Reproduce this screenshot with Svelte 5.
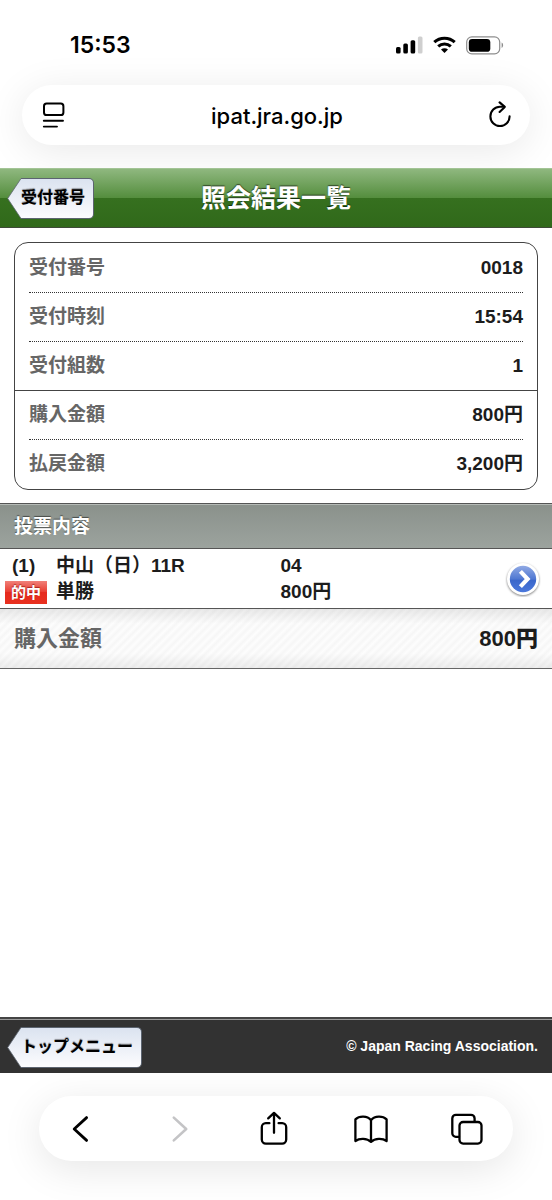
<script>
    let receipt = [
        { label: '受付番号', value: '0018' },
        { label: '受付時刻', value: '15:54' },
        { label: '受付組数', value: '1', last: true },
        { label: '購入金額', value: '800円' },
        { label: '払戻金額', value: '3,200円' }
    ];

    let bets = [
        { no: '(1)', hit: true, race: '中山（日）11R', type: '単勝', horse: '04', amount: '800円' }
    ];
</script>

{#snippet back(text)}
    <a class="back" href="#back">
        <svg width="14" height="41" viewBox="0 0 14 41" aria-hidden="true">
            <defs>
                <linearGradient id="tip" x1="0" y1="0" x2="0" y2="1">
                    <stop offset="0" stop-color="#dbe3f0" />
                    <stop offset="1" stop-color="#fcfcfe" />
                </linearGradient>
            </defs>
            <path d="M14 0.5 L0.7 20.5 L14 40.5 Z" fill="url(#tip)" />
            <path d="M14 0.5 L0.7 20.5 L14 40.5" fill="none" stroke="#5c6470" stroke-width="0.8" />
        </svg>
        <span>{text}</span>
    </a>
{/snippet}

<div class="screen">
    <div class="top">
        <div class="status">
            <span class="time">15:53</span>
            <div class="signals">
                <svg width="27" height="18" viewBox="0 0 27 18" aria-hidden="true">
                    <rect x="0" y="11" width="4.6" height="6.5" rx="1.5" />
                    <rect x="7.3" y="7.6" width="4.6" height="9.9" rx="1.5" />
                    <rect x="14.6" y="4.3" width="4.6" height="13.2" rx="1.5" />
                    <rect x="21.9" y="0.6" width="4.6" height="16.9" rx="1.5" fill="#cfcfcf" />
                </svg>
                <svg width="23" height="18" viewBox="0 0 23 18" fill="none" stroke="#000" stroke-width="3.1" aria-hidden="true">
                    <path d="M1.3 6.2 C7 0.9 16 0.9 21.7 6.2" />
                    <path d="M5.2 10.4 C8.8 7.2 14.2 7.2 17.8 10.4" />
                    <path d="M8 13.4 C10 11.7 13 11.7 15 13.4 L11.5 17.1 Z" fill="#000" stroke="none" />
                </svg>
                <svg width="38" height="19" viewBox="0 0 38 19" aria-hidden="true">
                    <rect x="0.7" y="0.9" width="33" height="17" rx="5.2" fill="#fff" stroke="#8d8d8d" stroke-width="1.2" />
                    <rect x="2.8" y="3" width="21.5" height="12.8" rx="3.4" />
                    <path d="M35.6 6.5 C37.6 7.3 37.6 11.1 35.6 12 Z" fill="#8d8d8d" />
                </svg>
            </div>
        </div>
        <div class="address">
            <button aria-label="ページメニュー">
                <svg width="24" height="28" viewBox="0 0 24 28" fill="none" stroke="#000" stroke-width="2" stroke-linecap="round" aria-hidden="true">
                    <rect x="2" y="2.6" width="19.4" height="11.4" rx="2.6" />
                    <path d="M1.8 19.8 H21 M1.8 25.6 H15" stroke-width="1.9" />
                </svg>
            </button>
            <span class="url">ipat.jra.go.jp</span>
            <button aria-label="再読み込み">
                <svg width="24" height="28" viewBox="0 0 24 28" fill="none" stroke="#000" stroke-width="2.1" stroke-linecap="round" stroke-linejoin="round" aria-hidden="true">
                    <path d="M21.6 15.4 A9.6 9.6 0 1 1 12 5.8 H16" />
                    <path d="M11.6 1.4 L16.8 5.9 L11.6 11" />
                </svg>
            </button>
        </div>
    </div>

    <header>
        {@render back('受付番号')}
        <h1>照会結果一覧</h1>
    </header>

    <main>
        <dl class="receipt">
            {#each receipt as row}
                <div class:last={row.last}>
                    <dt>{row.label}</dt>
                    <dd>{row.value}</dd>
                </div>
            {/each}
        </dl>

        <h2>投票内容</h2>
        {#each bets as bet}
            <a class="bet" href="#bet">
                <span class="no">
                    <span class="index">{bet.no}</span>
                    {#if bet.hit}<span class="hit">的中</span>{/if}
                </span>
                <span>{bet.race}<br />{bet.type}</span>
                <span>{bet.horse}<br />{bet.amount}</span>
                <svg width="36" height="36" viewBox="0 0 36 36" aria-hidden="true">
                    <defs>
                        <linearGradient id="ball" x1="0" y1="0" x2="0" y2="1">
                            <stop offset="0" stop-color="#90a9e4" />
                            <stop offset="0.5" stop-color="#5078d2" />
                            <stop offset="0.55" stop-color="#3a66ca" />
                            <stop offset="1" stop-color="#4b78dc" />
                        </linearGradient>
                    </defs>
                    <circle class="ring" cx="18" cy="18" r="16" fill="#fff" />
                    <circle cx="18" cy="18" r="13.2" fill="url(#ball)" />
                    <path d="M15.4 10.4 L22.6 18 L15.4 25.6" fill="none" stroke="#fff" stroke-width="4.2" />
                </svg>
            </a>
        {/each}

        <div class="total">
            <span>購入金額</span>
            <strong>800円</strong>
        </div>
    </main>

    <footer>
        {@render back('トップメニュー')}
        <small>© Japan Racing Association.</small>
    </footer>

    <div class="bottom">
        <nav>
            <button aria-label="戻る">
                <svg width="36" height="36" viewBox="0 0 36 36" aria-hidden="true">
                    <path d="M23.6 6.6 L11.2 18 L23.6 29.4" stroke-width="2.8" />
                </svg>
            </button>
            <button aria-label="進む" disabled>
                <svg width="36" height="36" viewBox="0 0 36 36" aria-hidden="true">
                    <path d="M13.8 6.6 L26.2 18 L13.8 29.4" stroke-width="2.6" stroke="#c4c4c6" />
                </svg>
            </button>
            <button aria-label="共有">
                <svg width="36" height="36" viewBox="0 0 36 36" aria-hidden="true">
                    <path d="M13.4 12.2 H9.8 A4 4 0 0 0 5.8 16.2 V28.6 A4 4 0 0 0 9.8 32.6 H26.2 A4 4 0 0 0 30.2 28.6 V16.2 A4 4 0 0 0 26.2 12.2 H22.6" />
                    <path d="M18 21.8 V2.2 M12.2 7.4 L18 1.9 L23.8 7.4" />
                </svg>
            </button>
            <button aria-label="ブックマーク">
                <svg width="36" height="36" viewBox="0 0 36 36" aria-hidden="true">
                    <path d="M18 9.2 C14.2 4.5 6.2 4.7 2.4 8.4 V30 C6.4 27 14 27 18 30.8 C22 27 29.6 27 33.6 30 V8.4 C29.8 4.7 21.8 4.5 18 9.2 Z M18 9.2 V30.8" />
                </svg>
            </button>
            <button aria-label="タブ">
                <svg width="36" height="36" viewBox="0 0 36 36" aria-hidden="true">
                    <path d="M10 25.8 H6.9 A3.6 3.6 0 0 1 3.3 22.2 V7.4 A3.6 3.6 0 0 1 6.9 3.8 H22 A3.6 3.6 0 0 1 25.6 7.4 V10.2" />
                    <rect x="10.5" y="11" width="22" height="21.6" rx="3.6" />
                </svg>
            </button>
        </nav>
    </div>
</div>

<style>
    :global(body) {
        margin: 0;
        background: #fff;
    }

    .screen {
        display: flex;
        flex-direction: column;
        min-height: 100vh;
        font-family: "Liberation Sans", "Noto Sans CJK JP", sans-serif;
        font-size: 19px;
        font-weight: bold;
        line-height: 26px;
        color: #1c1c1c;
    }

    a {
        color: inherit;
        text-decoration: none;
    }

    button {
        display: flex;
        padding: 0;
        border: 0;
        background: none;
    }

    svg {
        display: block;
        flex: none;
    }

    .top {
        padding: 0 22px 23px;
        overflow: hidden;
    }

    .status {
        display: flex;
        align-items: center;
        justify-content: space-between;
        height: 85px;
        padding: 5px 26px 0 48px;
        box-sizing: border-box;
    }

    .time {
        font-family: Inter, sans-serif;
        font-size: 23px;
        font-weight: 600;
        color: #000;
    }

    .signals {
        display: flex;
        align-items: center;
        gap: 10px;
    }

    .address {
        display: flex;
        align-items: center;
        justify-content: space-between;
        height: 60px;
        padding: 0 18px 0 20px;
        border-radius: 30px;
        background: #fff;
        box-shadow: 0 6px 40px rgba(0, 0, 0, 0.09);
    }

    .url {
        padding-top: 2px;
        font-family: Inter, sans-serif;
        font-size: 22px;
        font-weight: 500;
        color: #000;
    }

    header {
        display: grid;
        grid-template-columns: 1fr auto 1fr;
        align-items: center;
        height: 60px;
        padding: 0 7px;
        box-sizing: border-box;
        border-top: 1px solid #a3c496;
        border-bottom: 1px solid #3e4a38;
        background: linear-gradient(#8fb87f, #548d3d 50%, #36701f 50%, #30691a);
    }

    h1 {
        margin: 0;
        font-size: 25px;
        line-height: 36px;
        color: #fff;
        text-shadow: 0 -1px 1px rgba(0, 0, 0, 0.6);
    }

    .back {
        display: flex;
        justify-self: start;
        font-size: 16px;
        color: #000;
    }

    .back span {
        height: 41px;
        padding-right: 8px;
        box-sizing: border-box;
        border: 1px solid #5c6470;
        border-left: 0;
        border-radius: 0 5px 5px 0;
        background: linear-gradient(#dbe3f0, #fcfcfe);
        line-height: 38px;
        text-shadow: 0 -1px 1px rgba(0, 0, 0, 0.4);
    }

    main {
        flex: 1;
    }

    .receipt {
        margin: 14px 14px 13px;
        padding: 1px 0;
        border: 1px solid #444;
        border-radius: 14px;
    }

    .receipt div {
        display: flex;
        justify-content: space-between;
        margin: 0 14px;
        border-bottom: 1px dotted #333;
        line-height: 48px;
    }

    .receipt .last {
        margin: 0;
        padding: 0 14px;
        border-bottom: 1px solid #444;
    }

    .receipt div:last-child {
        border-bottom: 0;
    }

    dt {
        color: #666;
    }

    dd {
        margin: 0;
    }

    h2 {
        margin: 0;
        padding: 1px 14px 0;
        border-top: 1px solid #555;
        border-bottom: 1px solid #555;
        background: linear-gradient(#8a918b, #9ca39e);
        box-shadow: inset 0 1px #b5bab6;
        font-size: 19px;
        line-height: 43px;
        color: #fff;
        text-shadow: 0 -1px 1px rgba(0, 0, 0, 0.5);
    }

    .bet {
        display: grid;
        grid-template-columns: 51px 4fr 4fr 36px;
        align-items: center;
        padding: 4px 11px 3px 5px;
        border-bottom: 1px solid #555;
    }

    .no {
        display: grid;
        grid-template-rows: 26px 26px;
        align-items: center;
        justify-items: start;
    }

    .index {
        padding-left: 7px;
    }

    .hit {
        padding: 0 6px;
        background: linear-gradient(#f08078, #e93a2e 50%, #e62a1e 50%, #e8301f);
        font-size: 15px;
        line-height: 23px;
        color: #fff;
        text-shadow: 0 -1px 1px rgba(120, 0, 0, 0.6);
    }

    .ring {
        filter: drop-shadow(0 1px 1px rgba(0, 0, 0, 0.5));
    }

    .total {
        display: flex;
        justify-content: space-between;
        padding: 0 14px;
        border-bottom: 1px solid #666;
        background:
            linear-gradient(rgba(0, 0, 0, 0.08), transparent 25%, transparent 75%, rgba(0, 0, 0, 0.06)),
            repeating-linear-gradient(135deg, #fdfdfd 0, #f6f6f6 3px, #fdfdfd 6px);
        font-size: 22px;
        line-height: 59px;
    }

    .total span {
        color: #666;
    }

    footer {
        display: flex;
        align-items: center;
        justify-content: space-between;
        height: 56px;
        padding: 2px 14px 0 7px;
        box-sizing: border-box;
        border-top: 2px solid #444;
        background: #323232;
        box-shadow: inset 0 1px #999;
    }

    small {
        padding-bottom: 3px;
        font-size: 14px;
        color: #fff;
    }

    .bottom {
        padding: 23px 39px 39px;
        overflow: hidden;
    }

    nav {
        display: flex;
        align-items: center;
        justify-content: space-between;
        height: 65px;
        padding: 0 28px 0 24px;
        border-radius: 33px;
        background: #fff;
        box-shadow: 0 8px 40px rgba(0, 0, 0, 0.1);
    }

    nav svg {
        fill: none;
        stroke: #000;
        stroke-width: 2.3;
        stroke-linecap: round;
        stroke-linejoin: round;
    }
</style>
